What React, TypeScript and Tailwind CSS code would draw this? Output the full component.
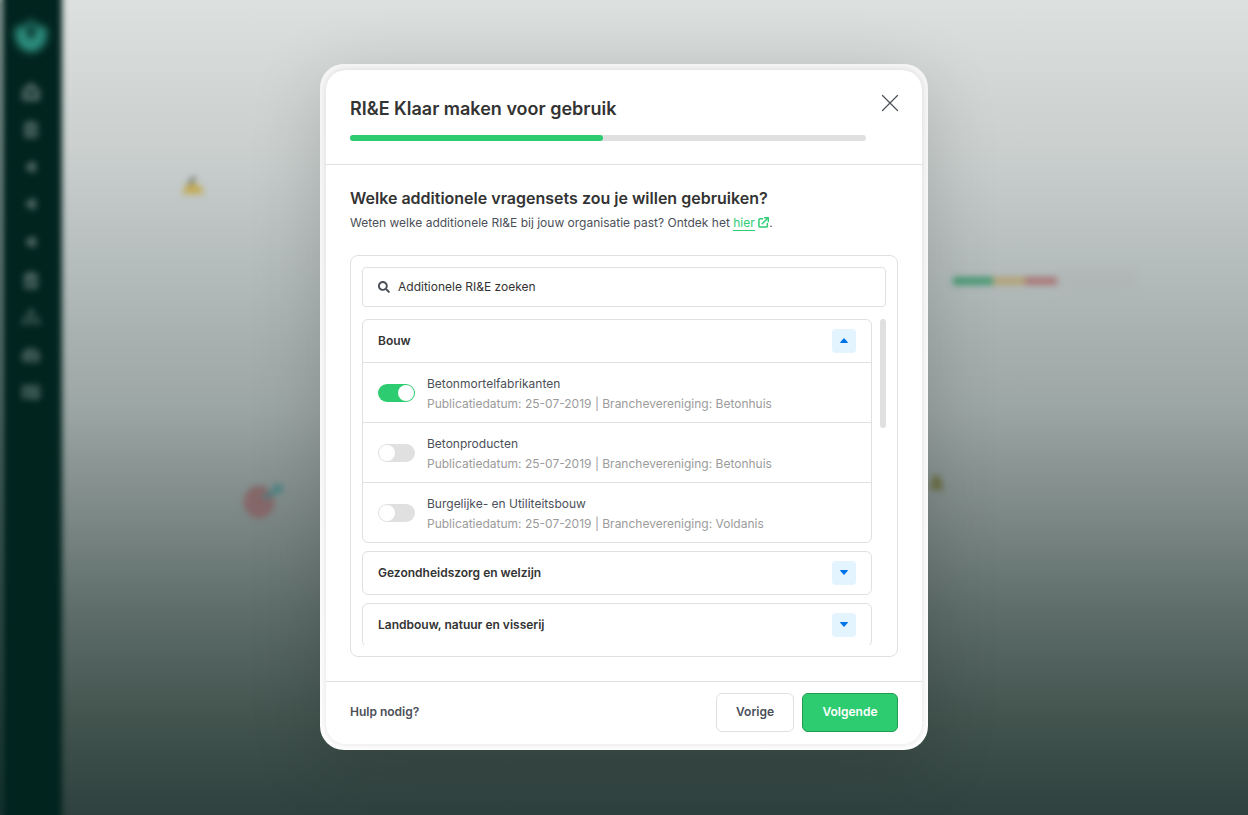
import React, { useState } from "react";
import {
  FaClipboardCheck,
  FaClipboardList,
  FaIdCard,
  FaSearch,
  FaSitemap,
  FaTachometerAlt,
} from "react-icons/fa";

type Item = { id: string; name: string; date: string; branch: string };
type Group = { title: string; items: Item[] };

const GROUPS: Group[] = [
  {
    title: "Bouw",
    items: [
      { id: "betonmortel", name: "Betonmortelfabrikanten", date: "25-07-2019", branch: "Betonhuis" },
      { id: "betonproducten", name: "Betonproducten", date: "25-07-2019", branch: "Betonhuis" },
      { id: "utiliteit", name: "Burgelijke- en Utiliteitsbouw", date: "25-07-2019", branch: "Voldanis" },
    ],
  },
  { title: "Gezondheidszorg en welzijn", items: [] },
  { title: "Landbouw, natuur en visserij", items: [] },
];

function LotusLogo() {
  return (
    <svg viewBox="0 0 36 36" className="h-9 w-9" fill="#2f9484">
      <path d="M18 2l7 6 9 2-1 11c-2 8-8 12-15 13C11 33 5 29 3 21L2 10l9-2z" />
      <path d="M18 6c5 4 7 11 0 16-7-5-5-12 0-16z" fill="#02241f" />
    </svg>
  );
}

function HomeIcon() {
  return (
    <svg viewBox="0 0 20 20" className="h-5 w-5" fill="currentColor">
      <path d="M10 0l9 8v9a2 2 0 0 1-2 2H3a2 2 0 0 1-2-2V8z" />
      <path d="M6 9h8v4H6z" fill="#02241f" />
    </svg>
  );
}

function Dot() {
  return (
    <svg viewBox="0 0 12 12" className="h-3 w-3" fill="currentColor">
      <path d="M0 6l5-5h6v10H5z" />
    </svg>
  );
}

function Backdrop() {
  return (
    <div
      aria-hidden="true"
      className="absolute inset-0 overflow-hidden bg-[linear-gradient(to_bottom,#dce0df_0%,#cbd0cf_18%,#b2baba_34%,#9ca6a4_50%,#7f8b89_62%,#5e6d6a_75%,#43544f_88%,#2e413e_100%)]"
    >
      <div className="absolute inset-y-0 -left-1 w-1.5 bg-linear-to-b from-[#7b918c] to-[#0e302b] blur-[2px]" />
      <div className="absolute -inset-y-4 left-0.5 w-[60px] bg-[#02241f] blur-[3px]" />
      <div className="absolute left-[13px] top-[18px] blur-[4px]">
        <LotusLogo />
      </div>
      <div className="absolute left-0.5 top-[73px] grid h-[338px] w-[58px] grid-rows-9 place-items-center text-[18px] text-[#6c827e] opacity-70 blur-[3px]">
        <HomeIcon />
        <FaClipboardList />
        <Dot />
        <Dot />
        <Dot />
        <FaClipboardCheck />
        <FaSitemap />
        <FaTachometerAlt />
        <FaIdCard />
      </div>

      <svg viewBox="0 0 28 24" className="absolute left-[179px] top-[173px] h-6 w-7 overflow-visible blur-[3px]">
        <path d="M3 21L7 12l9-2 8 6v5z" fill="#c2aa55" />
        <path d="M10 11l6-7" stroke="#59645f" strokeWidth="3" />
      </svg>
      <svg viewBox="0 0 48 40" className="absolute left-[240px] top-[481px] h-10 w-12 overflow-visible blur-[3px]">
        <ellipse cx="19" cy="21" rx="15" ry="16" fill="#876466" />
        <ellipse cx="19" cy="21" rx="7" ry="8" fill="none" stroke="#7f7878" strokeWidth="2" />
        <path d="M24 17l14-9" stroke="#4d8284" strokeWidth="5" />
        <circle cx="38" cy="8" r="5" fill="#4d8284" />
      </svg>
      <div className="absolute left-[1060px] top-[268px] h-6 w-[76px] bg-[#adaeae] opacity-25 blur-[4px]" />
      <div className="absolute left-[953px] top-[277px] flex h-2 w-[104px] blur-[3px]">
        <span className="w-10 bg-[#479873]" />
        <span className="w-8 bg-[#b3a377]" />
        <span className="w-8 bg-[#a87777]" />
      </div>
      <svg viewBox="0 0 20 20" className="absolute left-[927px] top-[472px] h-5 w-5 overflow-visible blur-[3px]">
        <path d="M3 18L6 4l6-1 5 15z" fill="#6c6f45" />
      </svg>
    </div>
  );
}

function ExternalLinkIcon() {
  return (
    <svg viewBox="0 0 12 12" className="inline-block h-[11px] w-[11px] align-[-1px]" fill="none" stroke="#2ecc71" strokeWidth="1.6">
      <path d="M5 1.8H2.3a1.3 1.3 0 0 0-1.3 1.3v6.6A1.3 1.3 0 0 0 2.3 11h6.6a1.3 1.3 0 0 0 1.3-1.3V7.2" strokeLinecap="round" />
      <path d="M4.6 7.4L10 2" strokeLinecap="round" />
      <path d="M7.2 .9h4v4" strokeLinecap="round" strokeLinejoin="round" />
    </svg>
  );
}

function Caret(props: { up: boolean }) {
  return (
    <svg viewBox="0 0 8 5" className="h-[5px] w-2" fill="currentColor">
      {props.up ? (
        <path d="M.8 5h6.4a.6.6 0 0 0 .4-1.1L4.5.4a.7.7 0 0 0-1 0L.4 3.9A.6.6 0 0 0 .8 5z" />
      ) : (
        <path d="M.8 0h6.4a.6.6 0 0 1 .4 1.1L4.5 4.6a.7.7 0 0 1-1 0L.4 1.1A.6.6 0 0 1 .8 0z" />
      )}
    </svg>
  );
}

function QuestionRow(props: { item: Item; checked: boolean; onToggle: () => void }) {
  const { item } = props;
  return (
    <label htmlFor={item.id} className="flex items-start gap-3 border-t border-[#e0e0e0] px-[15px] pb-2 pt-[11px]">
      <input
        id={item.id}
        type="checkbox"
        checked={props.checked}
        onChange={props.onToggle}
        className="mt-2.5 h-[18px] w-[37px] shrink-0 appearance-none rounded-full bg-[#e0e0e0] p-px transition before:block before:h-4 before:w-4 before:rounded-full before:bg-white checked:bg-[#2ecc71] checked:before:ml-auto"
      />
      <span className="leading-5">
        <span className="block text-[#4b4f58]">{item.name}</span>
        <span className="block text-[#9b9b9b]">
          Publicatiedatum: {item.date} | Branchevereniging: {item.branch}
        </span>
      </span>
    </label>
  );
}

export default function App() {
  const [open, setOpen] = useState("Bouw");
  const [selected, setSelected] = useState<string[]>(["betonmortel"]);

  const toggle = (id: string) =>
    setSelected((s) => (s.includes(id) ? s.filter((x) => x !== id) : [...s, id]));

  return (
    <div className="relative flex min-h-screen items-center justify-center pb-0.5 font-['Inter',sans-serif] text-[12px] text-[#333]">
      <Backdrop />

      <div
        role="dialog"
        aria-modal="true"
        aria-labelledby="dialog-title"
        className="relative w-full max-w-[608px] rounded-[24px] bg-linear-to-b from-[#f5f5f5] to-[#fefefe] p-1.5 shadow-[0_16px_72px_rgba(0,0,0,0.16)]"
      >
        <div className="rounded-[20px] bg-white shadow-[0_0_6px_rgba(0,0,0,0.12)]">
          <header className="flex items-start gap-4 border-b border-[#e0e0e0] px-6 pb-[23px] pt-6">
            <div className="grow">
              <h1 id="dialog-title" className="text-[18px] font-semibold leading-[30px]">
                RI&amp;E Klaar maken voor gebruik
              </h1>
              <div className="mt-[11px] h-1.5 rounded-full bg-[#e0e0e0]">
                <div className="h-1.5 w-[49%] rounded-full bg-[#2ecc71]" />
              </div>
            </div>
            <button type="button" aria-label="Sluiten" className="mt-px">
              <svg viewBox="0 0 16 16" className="h-4 w-4 overflow-visible" stroke="#4b4f58" strokeWidth="1.2" strokeLinecap="round">
                <path d="M.5 .5l15 15M15.5 .5l-15 15" />
              </svg>
            </button>
          </header>

          <main className="px-6 pb-6 pt-[23px]">
            <h2 className="text-[16px] font-semibold leading-5">
              Welke additionele vragensets zou je willen gebruiken?
            </h2>
            <p className="mt-[5px] leading-5 text-[#4b4f58]">
              Weten welke additionele RI&amp;E bij jouw organisatie past? Ontdek het{" "}
              <a href="#" className="text-[#2ecc71]">
                <span className="border-b border-[#2ecc71]">hier</span> <ExternalLinkIcon />
              </a>
              .
            </p>

            <section className="mt-[22px] rounded-lg border border-[#e0e0e0] p-[11px]">
              <label className="flex h-10 items-center gap-2 rounded-[4px] border border-[#e0e0e0] px-[15px]">
                <FaSearch className="h-3 w-3 text-[#4b4f58]" />
                <input
                  type="search"
                  aria-label="Additionele RI&E zoeken"
                  placeholder="Additionele RI&E zoeken"
                  className="grow bg-transparent outline-none placeholder:text-[#333]"
                />
              </label>

              <div className="mt-3 flex h-[326px] items-start gap-2">
                <div className="flex h-full grow flex-col gap-2 overflow-hidden">
                  {GROUPS.map((g) => (
                    <div key={g.title} className="shrink-0 rounded-md border border-[#e0e0e0]">
                      <div className="flex h-[42px] items-center justify-between px-[15px]">
                        <h3 className="font-semibold">{g.title}</h3>
                        <button
                          type="button"
                          aria-label={g.title}
                          aria-expanded={open === g.title}
                          onClick={() => setOpen(open === g.title ? "" : g.title)}
                          className="flex h-6 w-6 items-center justify-center rounded-[4px] bg-[#e3f4ff] text-[#0073ea]"
                        >
                          <Caret up={open === g.title} />
                        </button>
                      </div>
                      {open === g.title &&
                        g.items.map((item) => (
                          <QuestionRow
                            key={item.id}
                            item={item}
                            checked={selected.includes(item.id)}
                            onToggle={() => toggle(item.id)}
                          />
                        ))}
                    </div>
                  ))}
                </div>
                <div className="h-[109px] w-1.5 rounded-full bg-[#e0e0e0]" />
              </div>
            </section>
          </main>

          <footer className="flex items-center justify-between border-t border-[#e0e0e0] px-6 pb-3 pt-[11px] font-semibold">
            <a href="#" className="text-[#4b4f58]">Hulp nodig?</a>
            <div className="flex gap-2">
              <button type="button" className="h-[39px] rounded-md border border-[#e0e0e0] px-[19px] text-[#4b4f58]">
                Vorige
              </button>
              <button type="button" className="h-[39px] min-w-24 rounded-md border border-[#1f9a50] bg-[#2ecc71] px-[19px] text-white">
                Volgende
              </button>
            </div>
          </footer>
        </div>
      </div>
    </div>
  );
}
